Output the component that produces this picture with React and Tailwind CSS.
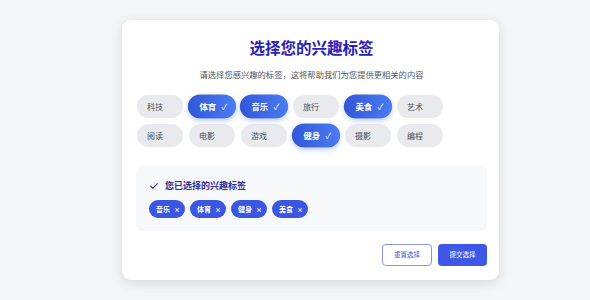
import { useState } from "react";

const allTags = ["科技", "体育", "音乐", "旅行", "美食", "艺术", "阅读", "电影", "游戏", "健身", "摄影", "编程"];

const font = { fontFamily: '"Noto Sans CJK SC", "Noto Sans", sans-serif' };

export default function App() {
    const [picked, setPicked] = useState(["音乐", "体育", "健身", "美食"]);

    const toggle = (t) => {
        setPicked((p) => (p.includes(t) ? p.filter((x) => x !== t) : [...p, t]));
    };

    return (
        <div className="min-h-screen w-full bg-[#f4f5f7] pt-[20px]" style={font}>
            <div className="ml-[122px] w-[377px] rounded-[9px] bg-white pl-[14px] pr-[12px] pt-[15px] pb-[14px] shadow-[0_3px_12px_rgba(0,0,0,0.12)]">
                <h1 className="text-center text-[15.5px] font-bold leading-[24px] text-[#2b22b5]">选择您的兴趣标签</h1>
                <p className="mt-[9px] text-center text-[8.3px] leading-[12px] text-[#4f5560]">
                    请选择您感兴趣的标签，这将帮助我们为您提供更相关的内容
                </p>

                <div className="mt-[15px] flex flex-wrap gap-x-[6px] gap-y-[6px] pl-px">
                    {allTags.map((t) => {
                        const on = picked.includes(t);
                        return (
                            <button
                                key={t}
                                onClick={() => toggle(t)}
                                className={
                                    on
                                        ? "flex h-[23px] w-[46px] scale-105 items-center rounded-full bg-gradient-to-r from-[#3356d8] to-[#4a7cf2] pl-[11px] text-[8px] font-bold text-white shadow-[0_2px_5px_rgba(59,91,219,0.3)]"
                                        : "flex h-[23px] w-[46px] items-center rounded-full bg-[#e8eaed] pl-[10px] text-[8px] text-[#4a4f57]"
                                }
                            >
                                {t}
                                {on && <span className="ml-[5px] text-[8px] font-normal">✓</span>}
                            </button>
                        );
                    })}
                </div>

                <div className="mt-[19px] rounded-[6px] bg-[#f7f8fa] px-[13px] pt-[13px] pb-[13px]">
                    <div className="flex items-center gap-[6px] text-[9px] font-bold leading-[14px] text-[#312c93]">
                        <svg width="10" height="10" viewBox="0 0 24 24" fill="none" stroke="currentColor" strokeWidth="2.5" strokeLinecap="round" strokeLinejoin="round">
                            <path d="M4 12.5l5 5L20 6.5" />
                        </svg>
                        您已选择的兴趣标签
                    </div>
                    <div className="mt-[7px] flex gap-[5px]">
                        {picked.map((t) => (
                            <span
                                key={t}
                                className="flex h-[18px] w-[36px] items-center rounded-full bg-[#3b57e2] pl-[7px] text-[7px] font-bold text-white"
                            >
                                {t}
                                <span className="ml-[4px] text-[6px]">×</span>
                            </span>
                        ))}
                    </div>
                </div>

                <div className="mt-[13px] flex justify-end gap-[6px]">
                    <button
                        onClick={() => setPicked([])}
                        className="h-[22px] w-[50px] rounded-[4px] border border-[#8795e4] bg-white text-[6.5px] text-[#4657c9]"
                    >
                        重置选择
                    </button>
                    <button className="h-[22px] w-[49px] rounded-[4px] bg-[#3f57e7] text-[6.5px] text-white">
                        提交选择
                    </button>
                </div>
            </div>
        </div>
    );
}
